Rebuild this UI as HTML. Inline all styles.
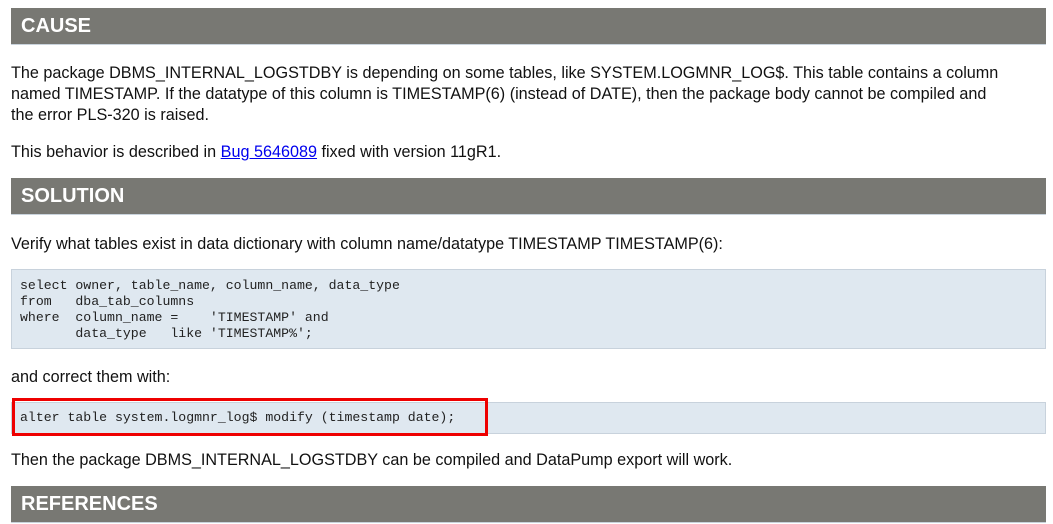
<!DOCTYPE html>
<html><head><meta charset="utf-8"><style>
body{margin:0;width:1053px;height:524px;background:#fff;position:relative;overflow:hidden;font-family:"Liberation Sans",sans-serif;color:#111}
.bar{position:absolute;left:11px;width:1035px;height:37px;background:#787873;border-bottom:1px solid #c9d3dc;color:#fff;font-weight:bold;font-size:20px;line-height:36px;padding-left:10px;box-sizing:border-box}
.t{position:absolute;left:11px;font-size:16.2px;line-height:21px;white-space:nowrap}
.code{position:absolute;left:11px;width:1035px;background:#dfe8f0;border:1px solid #c8d2dc;box-sizing:border-box;font-family:"Liberation Mono",monospace;font-size:13.2px;line-height:16px;padding-left:8px;white-space:pre;color:#222}
a{color:#0000ee}
</style></head><body>
<div class="bar" style="top:8px">CAUSE</div>
<div class="t" style="top:63px">The package DBMS_INTERNAL_LOGSTDBY is depending on some tables, like SYSTEM.LOGMNR_LOG$. This table contains a column<br>named TIMESTAMP. If the datatype of this column is TIMESTAMP(6) (instead of DATE), then the package body cannot be compiled and<br>the error PLS-320 is raised.</div>
<div class="t" style="top:142px">This behavior is described in <a href="#">Bug 5646089</a> fixed with version 11gR1.</div>
<div class="bar" style="top:178px">SOLUTION</div>
<div class="t" style="top:234px">Verify what tables exist in data dictionary with column name/datatype TIMESTAMP TIMESTAMP(6):</div>
<div class="code" style="top:269px;height:80px;padding-top:8px">select owner, table_name, column_name, data_type
from   dba_tab_columns
where  column_name =    'TIMESTAMP' and
       data_type   like 'TIMESTAMP%';</div>
<div class="t" style="top:367px">and correct them with:</div>
<div class="code" style="top:402px;height:32px;padding-top:7px">alter table system.logmnr_log$ modify (timestamp date);</div>
<div style="position:absolute;left:12px;top:398px;width:476px;height:38px;border:3px solid #e00;box-sizing:border-box"></div>
<div class="t" style="top:450px">Then the package DBMS_INTERNAL_LOGSTDBY can be compiled and DataPump export will work.</div>
<div class="bar" style="top:486px">REFERENCES</div>
</body></html>
